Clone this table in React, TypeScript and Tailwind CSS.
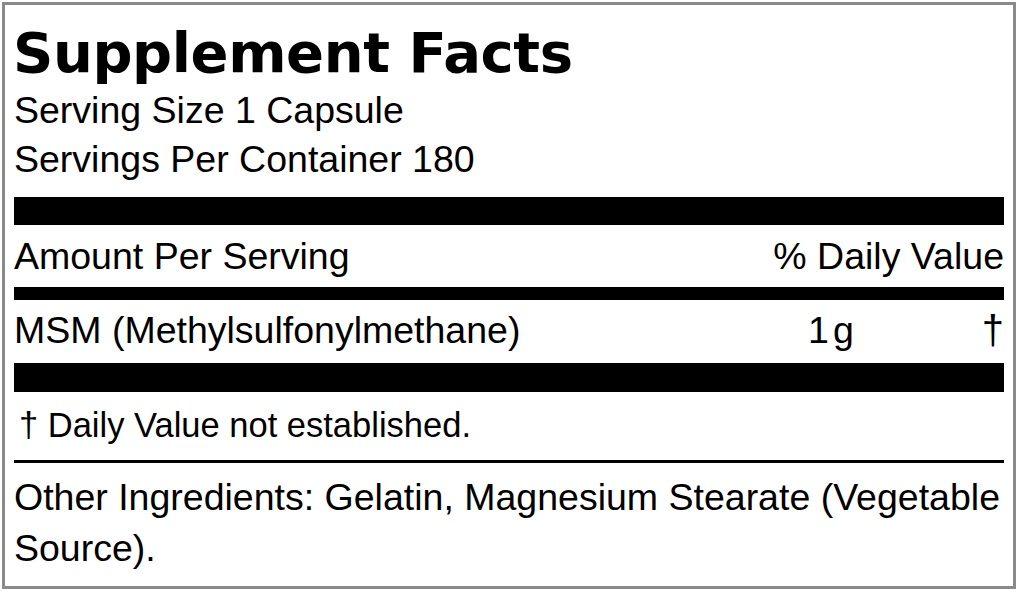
export default function App() {
  return (
    <div className="w-[1024px] h-[596px] bg-white pt-[2px] pl-[2px] font-['Liberation_Sans',Arial,sans-serif] text-black">
      <div className="w-[1014px] h-[587px] border-[3px] border-[#8a8a8a] px-[9px] flex flex-col">
        <h1 className="mt-[16px] -ml-[1px] h-[64px] leading-[64px] text-[56px] font-bold tracking-[-0.4px] font-['DejaVu_Sans',Verdana,sans-serif] whitespace-nowrap">
          Supplement Facts
        </h1>
        <p className="mt-[1px] h-[49px] leading-[49px] text-[37.5px] whitespace-nowrap">Serving Size 1 Capsule</p>
        <p className="h-[49px] leading-[49px] text-[37.5px] whitespace-nowrap">Servings Per Container 180</p>
        <div className="mt-[13px] h-[28px] bg-black" />
        <div className="pt-[7px] h-[62px] flex justify-between text-[37.5px] leading-[49px] whitespace-nowrap">
          <span>Amount Per Serving</span>
          <span>% Daily Value</span>
        </div>
        <div className="h-[13px] bg-black" />
        <div className="pt-[6px] h-[63px] flex text-[37.5px] leading-[49px] whitespace-nowrap">
          <span className="flex-1">MSM (Methylsulfonylmethane)</span>
          <span>1</span>
          <span className="ml-[4px]">g</span>
          <span className="ml-[128px] text-[40px]">†</span>
        </div>
        <div className="h-[29px] bg-black" />
        <p className="pt-[11px] pl-[5px] text-[34.5px] leading-[44px] whitespace-nowrap">† Daily Value not established.</p>
        <div className="mt-[13px] h-[3px] bg-black" />
        <p className="pt-[9px] text-[37.5px] leading-[51px]">
          Other Ingredients: Gelatin, Magnesium Stearate (Vegetable Source).
        </p>
      </div>
    </div>
  );
}
